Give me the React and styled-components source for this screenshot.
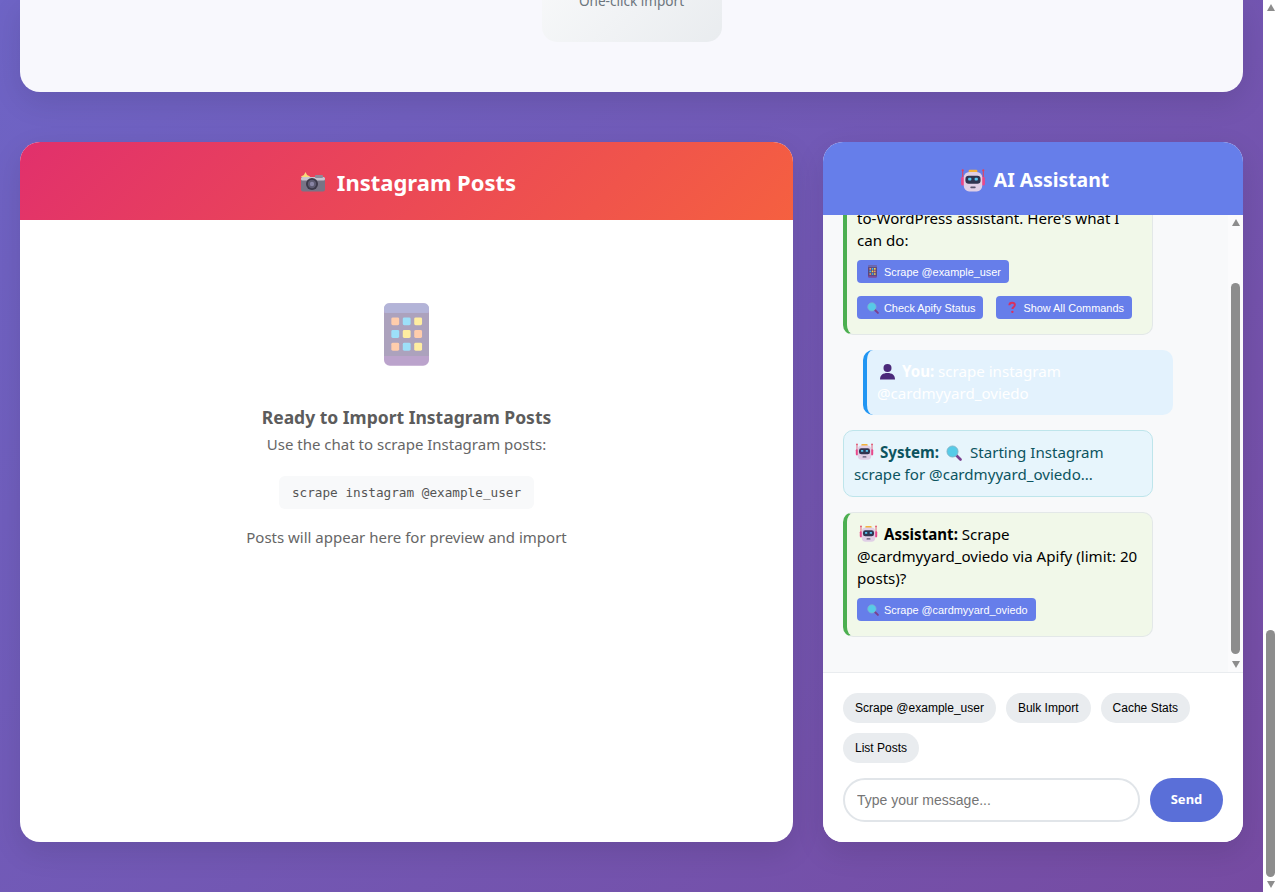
import React from 'react'
import styled, { createGlobalStyle } from 'styled-components'

const GlobalStyle = createGlobalStyle`
  html, body { margin: 0; padding: 0; height: 100%; overflow: hidden; }
  body { font-family: "Open Sans", "Noto Sans", sans-serif; }
  #root { height: 100%; }
  * { box-sizing: border-box; }
`

const UI = '"Noto Sans", "Open Sans", sans-serif'
const ARIAL = '"Liberation Sans", Arial, sans-serif'

const Window = styled.div`
  display: flex;
  height: 892px;
  width: 1278px;
  overflow: hidden;
`
const Page = styled.main`
  flex: 1;
  min-width: 0;
  height: 892px;
  padding: 0 20px 50px;
  display: flex;
  flex-direction: column;
  background: linear-gradient(135deg, #667eea 0%, #764ba2 100%);
  background-size: 1263px 3100px;
  background-position: left bottom;
`
const TopPanel = styled.section`
  height: 92px;
  flex: none;
  overflow: hidden;
  display: flex;
  flex-direction: column;
  align-items: center;
  justify-content: flex-end;
  padding-bottom: 50px;
  background: #f8f8fd;
  border-radius: 0 0 20px 20px;
  box-shadow: 0 10px 30px rgba(0, 0, 0, 0.1);
`
const ImportCard = styled.div`
  width: 180px;
  flex: none;
  padding: 20px 0 30px;
  text-align: center;
  font-family: ${UI};
  font-size: 13.6px;
  line-height: 22px;
  color: #6c757d;
  background: linear-gradient(135deg, #f8f9fa, #e9ecef);
  border-radius: 15px;
`
const Columns = styled.div`
  flex: 1;
  min-height: 0;
  margin-top: 50px;
  display: grid;
  grid-template-columns: 1fr 420px;
  gap: 30px;
`
const Panel = styled.section`
  display: flex;
  flex-direction: column;
  min-height: 0;
  background: #fff;
  border-radius: 20px;
  overflow: hidden;
  box-shadow: 0 10px 30px rgba(0, 0, 0, 0.1);
`
const PostsHeader = styled.header`
  height: 78px;
  flex: none;
  display: flex;
  align-items: center;
  justify-content: center;
  gap: 11px;
  padding: 2px 0 0 3px;
  color: #fff;
  font-family: ${UI};
  font-size: 22px;
  font-weight: 700;
  background: linear-gradient(135deg, #e1306c, #f56040);
`
const ChatHeader = styled(PostsHeader)`
  height: 73px;
  gap: 8px;
  padding-top: 2px;
  font-size: 19.4px;
  background: #667eea;
`
const EmptyState = styled.div`
  flex: 1;
  display: flex;
  flex-direction: column;
  align-items: center;
  padding-top: 83px;
  font-family: ${UI};
  color: #666;
  text-align: center;
`
const EmptyIcon = styled.div`
  height: 63px;
  margin-bottom: 39px;
  opacity: 0.5;
`
const EmptyTitle = styled.h3`
  margin: 0 0 4px;
  font-size: 17.5px;
  line-height: 24px;
  font-weight: 700;
  color: #5c5c5c;
`
const EmptyText = styled.p`
  margin: 0;
  font-size: 15px;
  line-height: 22px;
  color: #666;
`
const Code = styled.code`
  margin: 21px 0 17px;
  padding: 0 12.5px;
  height: 33px;
  display: flex;
  align-items: center;
  font-family: "DejaVu Sans Mono", monospace;
  font-size: 12.7px;
  color: #555;
  background: #f8f9fa;
  border-radius: 6px;
`
const Messages = styled.div`
  flex: 1;
  min-height: 0;
  display: flex;
  position: relative;
  background: #f8f9fa;
  overflow: hidden;
  border-bottom: 1px solid #e9ecef;
`
const MessageList = styled.div`
  flex: 1;
  min-width: 0;
  display: flex;
  flex-direction: column;
  justify-content: flex-end;
  align-items: flex-start;
  padding: 0 20px 35px;
  font-family: ${UI};
  font-size: 15.1px;
  line-height: 22px;
`
const Message = styled.div`
  flex: none;
  width: 310px;
  padding: 10px 11px ${p => p.$pb || 11}px 10px;
  margin-top: 15px;
  border-radius: 10px;
  color: ${p => p.$color || '#000'};
  background: ${p => p.$bg};
  border: ${p => p.$border || '1px solid #e3e8e8'};
  border-left: ${p => p.$left};
  margin-left: ${p => p.$indent || 0}px;
`
const ActionRow = styled.div`
  display: flex;
  flex-wrap: wrap;
  gap: 13px;
  margin-top: ${p => p.$top || 9}px;
`
const Action = styled.button`
  height: 23px;
  padding: 0 8px 0 9px;
  display: inline-flex;
  align-items: center;
  gap: 5px;
  border: 0;
  border-radius: 4px;
  background: #667eea;
  color: #fff;
  font-family: ${ARIAL};
  font-size: 10.9px;
`
const ActionIcon = styled.span`
  width: 13px;
  display: inline-flex;
  justify-content: center;
`
const Track = styled.div`
  width: 15px;
  flex: none;
  display: flex;
  flex-direction: column;
  align-items: center;
  background: ${p => p.$bg || '#fff'};
`
const Arrow = styled.div`
  height: 15px;
  width: 15px;
  flex: none;
  display: flex;
  align-items: center;
  justify-content: center;
  &::before {
    content: '';
    border-left: 4.5px solid transparent;
    border-right: 4.5px solid transparent;
    border-${p => (p.$down ? 'top' : 'bottom')}: 7px solid #8d8d8d;
  }
`
const Gutter = styled.div`
  flex: 1;
  width: 100%;
  display: flex;
  flex-direction: column;
  align-items: center;
  justify-content: flex-end;
`
const Thumb = styled.div`
  width: 9px;
  flex: none;
  height: ${p => p.$h}px;
  margin-bottom: ${p => p.$mb || 0}px;
  background: #8d8d8d;
  border-radius: 5px;
`
const Composer = styled.div`
  flex: none;
  padding: 20px;
  background: #fff;
`
const Chips = styled.div`
  display: flex;
  flex-wrap: wrap;
  gap: 10px;
  margin-bottom: 15px;
`
const Chip = styled.button`
  height: 30px;
  padding: 0 12px;
  border: 0;
  border-radius: 15px;
  background: #e9ecef;
  color: #000;
  font-family: ${ARIAL};
  font-size: 12px;
`
const InputRow = styled.div`
  display: flex;
  gap: 10px;
`
const Input = styled.input`
  flex: 1;
  min-width: 0;
  height: 44px;
  padding: 0 12px;
  border: 2px solid #e1e5e9;
  border-radius: 25px;
  font-family: ${ARIAL};
  font-size: 14px;
  &::placeholder { color: #757575; }
`
const Send = styled.button`
  width: 73px;
  height: 44px;
  padding: 0 0 2px;
  border: 0;
  border-radius: 25px;
  background: #5a6fd8;
  color: #fff;
  font-family: ${UI};
  font-size: 13px;
  font-weight: 700;
`
const Bold = styled.strong`
  font-weight: 700;
`
const InlineIcon = styled.span`
  display: inline-flex;
  vertical-align: -3px;
  margin: 0 ${p => p.$gap ?? 6}px 0 ${p => p.$before ?? 2}px;
`

function Robot({ size = 19 }) {
  return (
    <svg width={size} height={size} viewBox="0 0 24 24">
      <path d="M2.5 3v8M21.5 3v8" stroke="#e0405f" strokeWidth="1" />
      <circle cx="2.5" cy="3" r="1" fill="#e0405f" />
      <circle cx="21.5" cy="3" r="1" fill="#e0405f" />
      <rect x="8" y="2.5" width="8" height="3" rx="1" fill="#f3b33d" />
      <rect x="1" y="9" width="3" height="8" rx="1.4" fill="#e8488a" />
      <rect x="20" y="9" width="3" height="8" rx="1.4" fill="#e8488a" />
      <rect x="3.5" y="4.5" width="17" height="18" rx="5" fill="#e0cfe6" />
      <rect x="5" y="8" width="14" height="7.5" rx="3" fill="#2f3450" />
      <rect x="7.5" y="10" width="3" height="2.4" rx=".8" fill="#56c7f2" />
      <rect x="13.5" y="10" width="3" height="2.4" rx=".8" fill="#56c7f2" />
      <rect x="9.5" y="18" width="5" height="1.6" rx=".8" fill="#5b5670" />
    </svg>
  )
}

function Camera() {
  return (
    <svg width="26" height="26" viewBox="0 0 26 26">
      <path d="M5.5 3l1.6 3 3 1.6-3 1.6-1.6 3-1.6-3-3-1.6 3-1.6z" fill="#f8da7a" />
      <rect x="1" y="8" width="24" height="14.5" rx="2" fill="#787486" />
      <rect x="1" y="8" width="24" height="3.5" rx="1.5" fill="#c9c4cf" />
      <rect x="15" y="6" width="8" height="3" rx="1" fill="#8e8a99" />
      <circle cx="12" cy="15" r="6" fill="#3b3848" />
      <circle cx="12" cy="15" r="4.2" fill="#5d5a70" />
      <circle cx="12" cy="15" r="2.2" fill="#8a86a5" />
    </svg>
  )
}

function Phone({ w = 45, h = 63 }) {
  const cells = ['#ff9c5c', '#3dc3f5', '#ffdd45', '#3dc3f5', '#ffdd45', '#ff9c5c', '#ff9c5c', '#3dc3f5', '#ffdd45']
  return (
    <svg width={w} height={h} viewBox="0 0 46 64">
      <rect width="46" height="64" rx="6" fill="#7a4a9a" />
      <rect width="46" height="12" rx="5" fill="#6a6cb2" />
      <rect y="10" width="46" height="44" fill="#5b477d" />
      {cells.map((c, i) => (
        <rect key={i} x={7.5 + (i % 3) * 11.7} y={14.5 + Math.floor(i / 3) * 13} width="8" height="8" rx="1.5" fill={c} />
      ))}
    </svg>
  )
}

function Lens({ size = 12 }) {
  return (
    <svg width={size} height={size} viewBox="0 0 16 16">
      <path d="M10 10l4.5 4.5" stroke="#7a3f8f" strokeWidth="2.6" strokeLinecap="round" />
      <circle cx="6.5" cy="6.5" r="5.5" fill="#56cbe8" stroke="#7db5c9" strokeWidth="1" />
    </svg>
  )
}

function Question() {
  return (
    <svg width="12" height="13" viewBox="0 0 16 16">
      <path d="M4.5 5c0-2 1.6-3.3 3.6-3.3S11.8 3 11.8 4.8c0 2.4-3.3 2.6-3.3 5.2" fill="none" stroke="#d9305f" strokeWidth="2.6" />
      <circle cx="8.5" cy="13.8" r="1.6" fill="#d9305f" />
    </svg>
  )
}

function Person() {
  return (
    <svg width="17" height="17" viewBox="0 0 17 17">
      <circle cx="8.5" cy="5" r="4" fill="#4b2a7a" />
      <path d="M1 16.5c0-4.5 3-6.500 7.500-6.500s7.500 2 7.500 6.500z" fill="#4b2a7a" />
    </svg>
  )
}

export default function App() {
  return (
    <Window>
      <GlobalStyle />
      <Page>
        <TopPanel>
          <ImportCard>One-click import</ImportCard>
        </TopPanel>
        <Columns>
          <Panel>
            <PostsHeader><Camera /> Instagram Posts</PostsHeader>
            <EmptyState>
              <EmptyIcon><Phone /></EmptyIcon>
              <EmptyTitle>Ready to Import Instagram Posts</EmptyTitle>
              <EmptyText>Use the chat to scrape Instagram posts:</EmptyText>
              <Code>scrape instagram @example_user</Code>
              <EmptyText>Posts will appear here for preview and import</EmptyText>
            </EmptyState>
          </Panel>
          <Panel>
            <ChatHeader><Robot size={26} /> AI Assistant</ChatHeader>
            <Messages>
              <MessageList>
                <Message $bg="#f1f8e9" $left="4px solid #4caf50" $pb={15}>
                  <InlineIcon><Robot /></InlineIcon>
                  <Bold>Assistant:</Bold> Hi! I'm your Instagram-to-WordPress assistant. Here's what I can do:
                  <ActionRow>
                    <Action><ActionIcon><Phone w={9} h={13} /></ActionIcon> Scrape @example_user</Action>
                  </ActionRow>
                  <ActionRow $top={13}>
                    <Action><ActionIcon><Lens /></ActionIcon> Check Apify Status</Action>
                    <Action><ActionIcon><Question /></ActionIcon> Show All Commands</Action>
                  </ActionRow>
                </Message>
                <Message $bg="#e3f2fd" $color="#fff" $border="0" $left="4px solid #2196f3" $indent={20}>
                  <InlineIcon><Person /></InlineIcon>
                  <Bold>You:</Bold> scrape instagram @cardmyyard_oviedo
                </Message>
                <Message $bg="#e7f5fc" $color="#0c5460" $border="1px solid #bee5eb">
                  <InlineIcon $before={1}><Robot /></InlineIcon>
                  <Bold>System:</Bold> <InlineIcon $before={3} $gap={8}><Lens size={16} /></InlineIcon>Starting Instagram scrape for @cardmyyard_oviedo...
                </Message>
                <Message $bg="#f1f8e9" $left="4px solid #4caf50" $pb={15}>
                  <InlineIcon><Robot /></InlineIcon>
                  <Bold>Assistant:</Bold> Scrape @cardmyyard_oviedo via Apify (limit: 20 posts)?
                  <ActionRow>
                    <Action><ActionIcon><Lens /></ActionIcon> Scrape @cardmyyard_oviedo</Action>
                  </ActionRow>
                </Message>
              </MessageList>
              <Track $bg="#fbfbfc">
                <Arrow />
                <Gutter><Thumb $h={371} $mb={3} /></Gutter>
                <Arrow $down />
              </Track>
            </Messages>
            <Composer>
              <Chips>
                <Chip>Scrape @example_user</Chip>
                <Chip>Bulk Import</Chip>
                <Chip>Cache Stats</Chip>
                <Chip>List Posts</Chip>
              </Chips>
              <InputRow>
                <Input placeholder="Type your message..." />
                <Send>Send</Send>
              </InputRow>
            </Composer>
          </Panel>
        </Columns>
      </Page>
      <Track>
        <Arrow />
        <Gutter><Thumb $h={247} /></Gutter>
        <Arrow $down />
      </Track>
    </Window>
  )
}
